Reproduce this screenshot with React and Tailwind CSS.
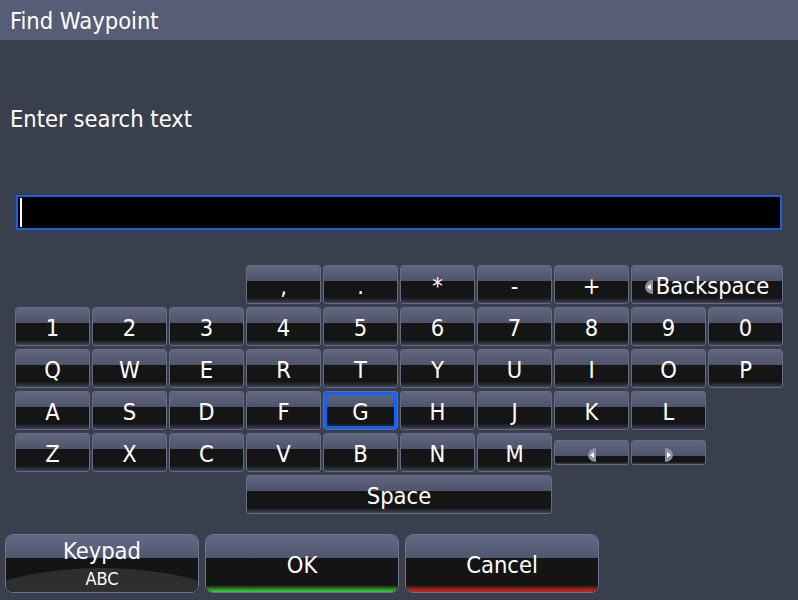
import React from "react";

const font = "font-['DejaVu_Sans_Condensed','DejaVu_Sans',sans-serif]";

// Glossy keyboard key: light top half, black lower half
const Key = ({ label, className = "", selected = false, children }) => (
  <div
    className={`relative rounded-[3px] border border-[#656b83] overflow-hidden flex flex-col ${className}`}
  >
    <div className="h-[15px] bg-gradient-to-b from-[#60677f] to-[#4e546a] shrink-0" />
    <div className="flex-1 bg-gradient-to-b from-[#151515] from-75% to-[#3e4458]" />
    <div className="absolute inset-0 flex items-center justify-center pt-[4px] text-[23.5px] leading-none text-white">
      {label}
      {children}
    </div>
    {selected && (
      <div className="absolute inset-0 rounded-[2px] border-[3px] border-[#1463f5]" />
    )}
  </div>
);

const ArrowGlyph = ({ dir }) => (
  <svg width="8" height="14" viewBox="0 0 8 14">
    {dir === "left" ? (
      <>
        <path d="M8 0 A8 7 0 0 0 8 14 Z" fill="#8a8f9c" />
        <path d="M6 4 L2 7 L6 10 Z" fill="#ffffff" />
      </>
    ) : (
      <>
        <path d="M0 0 A8 7 0 0 1 0 14 Z" fill="#8a8f9c" />
        <path d="M2 4 L6 7 L2 10 Z" fill="#ffffff" />
      </>
    )}
  </svg>
);

const BigButton = ({ children, glow, arc }) => (
  <div className="relative w-[194px] h-[59px] rounded-[8px] border border-[#6d7390] overflow-hidden flex flex-col">
    <div className="h-[23px] bg-gradient-to-b from-[#626a86] to-[#4f566d] shrink-0" />
    <div className="flex-1 bg-[#141414] relative overflow-hidden">
      {arc && (
        <div className="absolute left-[-60px] right-[-60px] top-[10px] h-[120px] rounded-[50%] bg-gradient-to-b from-[#2d2d2d] to-[#3a3a3a]" />
      )}
      {glow === "green" && (
        <div className="absolute left-0 right-0 bottom-0 h-[7px] bg-gradient-to-b from-[#141414] to-[#22e61c]" />
      )}
      {glow === "red" && (
        <div className="absolute left-0 right-0 bottom-0 h-[7px] bg-gradient-to-b from-[#141414] to-[#ee1010]" />
      )}
    </div>
    <div className="absolute inset-0">{children}</div>
  </div>
);

export default function App() {
  const symbols = [",", ".", "*", "-", "+"];
  const digits = ["1", "2", "3", "4", "5", "6", "7", "8", "9", "0"];
  const row3 = ["Q", "W", "E", "R", "T", "Y", "U", "I", "O", "P"];
  const row4 = ["A", "S", "D", "F", "G", "H", "J", "K", "L"];
  const row5 = ["Z", "X", "C", "V", "B", "N", "M"];

  return (
    <div className={`w-[798px] h-[600px] bg-[#3a3f4d] text-white flex flex-col ${font}`}>
      <div className="h-[40px] bg-[#565e77] flex items-center px-[10px] pt-[3px] text-[23.5px]">
        Find Waypoint
      </div>

      <div className="pl-[10px] pt-[66px] text-[23.5px] leading-[26px]">Enter search text</div>

      <div className="mx-[16px] mt-[63px] h-[35px] border-2 border-[#1a5fe0] bg-black flex items-center pl-[2px]">
        <div className="w-[2px] h-[29px] bg-white" />
      </div>

      <div className="mt-[35px] ml-[15px] grid grid-cols-[repeat(10,75px)] grid-rows-[repeat(6,39px)] gap-x-[2px] gap-y-[3px]">
        {symbols.map((s, i) => (
          <Key key={s} label={s} className={i === 0 ? "col-start-4" : ""} />
        ))}
        <Key className="col-span-2">
          <span className="mr-[3px] mt-[1px] flex">
            <ArrowGlyph dir="left" />
          </span>
          Backspace
        </Key>

        {digits.map((d) => (
          <Key key={d} label={d} />
        ))}
        {row3.map((d) => (
          <Key key={d} label={d} />
        ))}
        {row4.map((d) => (
          <Key key={d} label={d} selected={d === "G"} />
        ))}
        <div />
        {row5.map((d) => (
          <Key key={d} label={d} />
        ))}
        <Key className="self-center h-[25px]">
          <ArrowGlyph dir="left" />
        </Key>
        <Key className="self-center h-[25px]">
          <ArrowGlyph dir="right" />
        </Key>
        <div />

        <Key label="Space" className="col-start-4 col-span-4" />
      </div>

      <div className="mt-[20px] ml-[5px] flex gap-[6px] text-[23.5px]">
        <BigButton arc>
          <div className="flex flex-col items-center pt-[3px]">
            <span className="leading-[26px]">Keypad</span>
            <span className="text-[18px] leading-[20px] mt-[5px]">ABC</span>
          </div>
        </BigButton>
        <BigButton glow="green">
          <div className="h-full flex items-center justify-center pt-[5px]">OK</div>
        </BigButton>
        <BigButton glow="red">
          <div className="h-full flex items-center justify-center pt-[5px]">Cancel</div>
        </BigButton>
      </div>
    </div>
  );
}
